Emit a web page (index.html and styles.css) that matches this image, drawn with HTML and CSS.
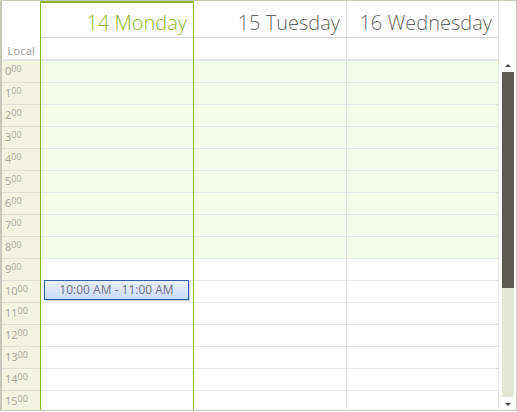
FILE: index.html
```html
<!DOCTYPE html>
<html>
<head>
<meta charset="utf-8">
<link rel="stylesheet" href="styles.css">
</head>
<body>
<div class="scheduler">
  <div class="head">
    <div class="corner"><span class="local">Local</span></div>
    <div class="day today"><div class="title">14 Monday</div><div class="allday"></div></div>
    <div class="day"><div class="title">15 Tuesday</div><div class="allday"></div></div>
    <div class="day"><div class="title">16 Wednesday</div><div class="allday"></div></div>
    <div class="head-fill"></div>
  </div>
  <div class="body">
    <div class="times">
      <div class="hour">0<sup>00</sup></div>
      <div class="hour">1<sup>00</sup></div>
      <div class="hour">2<sup>00</sup></div>
      <div class="hour">3<sup>00</sup></div>
      <div class="hour">4<sup>00</sup></div>
      <div class="hour">5<sup>00</sup></div>
      <div class="hour">6<sup>00</sup></div>
      <div class="hour">7<sup>00</sup></div>
      <div class="hour">8<sup>00</sup></div>
      <div class="hour">9<sup>00</sup></div>
      <div class="hour">10<sup>00</sup></div>
      <div class="hour">11<sup>00</sup></div>
      <div class="hour">12<sup>00</sup></div>
      <div class="hour">13<sup>00</sup></div>
      <div class="hour">14<sup>00</sup></div>
      <div class="hour">15<sup>00</sup></div>
    </div>
    <div class="col today">
      <div class="cell off"></div><div class="cell off"></div><div class="cell off"></div><div class="cell off"></div>
      <div class="cell off"></div><div class="cell off"></div><div class="cell off"></div><div class="cell off"></div>
      <div class="cell off"></div><div class="cell"></div><div class="cell"></div><div class="cell"></div>
      <div class="cell"></div><div class="cell"></div><div class="cell"></div><div class="cell"></div>
      <div class="appt">10:00 AM - 11:00 AM</div>
    </div>
    <div class="col">
      <div class="cell off"></div><div class="cell off"></div><div class="cell off"></div><div class="cell off"></div>
      <div class="cell off"></div><div class="cell off"></div><div class="cell off"></div><div class="cell off"></div>
      <div class="cell off"></div><div class="cell"></div><div class="cell"></div><div class="cell"></div>
      <div class="cell"></div><div class="cell"></div><div class="cell"></div><div class="cell"></div>
    </div>
    <div class="col">
      <div class="cell off"></div><div class="cell off"></div><div class="cell off"></div><div class="cell off"></div>
      <div class="cell off"></div><div class="cell off"></div><div class="cell off"></div><div class="cell off"></div>
      <div class="cell off"></div><div class="cell"></div><div class="cell"></div><div class="cell"></div>
      <div class="cell"></div><div class="cell"></div><div class="cell"></div><div class="cell"></div>
    </div>
    <div class="scrollbar">
      <div class="arrow up"></div>
      <div class="thumb"></div>
      <div class="track"></div>
      <div class="arrow down"></div>
    </div>
  </div>
</div>
</body>
</html>
```
FILE: styles.css
```css
html, body {
  margin: 0;
  padding: 0;
  background: #ffffff;
}

.scheduler {
  width: 517px;
  height: 411px;
  box-sizing: border-box;
  border: 1px solid #c9c9ba;
  border-left-width: 2px;
  display: flex;
  flex-direction: column;
  font-family: "Open Sans", "Noto Sans", sans-serif;
  overflow: hidden;
  background: #ffffff;
}

.head {
  display: flex;
  height: 60px;
  flex: none;
}

.corner {
  width: 38px;
  box-sizing: border-box;
  border-bottom: 2px solid #e6e6e6;
  display: flex;
  align-items: flex-end;
  justify-content: flex-end;
  padding: 0 5px 1px 0;
}

.local {
  font-size: 11.5px;
  line-height: 14px;
  color: #a49d98;
}

.day {
  width: 153px;
  box-sizing: border-box;
  border-right: 1px solid #e4e4e4;
  display: flex;
  flex-direction: column;
}

.day:nth-child(4) {
  width: 152px;
}

.day.today {
  width: 154px;
  border-left: 1px solid #8db51d;
  border-right: 1px solid #8db51d;
}

.title {
  height: 37px;
  box-sizing: border-box;
  border-bottom: 1px solid #d6d6d6;
  text-align: right;
  padding: 8px 6px 0 0;
  font-size: 20px;
  line-height: 28px;
  font-weight: 300;
  color: #666666;
  white-space: nowrap;
}

.today .title {
  border-top: 2px solid #8db51d;
  padding-top: 6px;
  color: #92b92a;
}

.allday {
  height: 23px;
  box-sizing: border-box;
  border-bottom: 2px solid #e6e6e6;
}

.head-fill {
  flex: 1;
}

.body {
  flex: 1;
  display: flex;
  overflow: hidden;
  min-height: 0;
}

.times {
  width: 38px;
  flex: none;
  background: #f2f4df;
}

.hour {
  height: 22px;
  box-sizing: border-box;
  border-bottom: 1px solid #dfe0d3;
  padding: 3px 0 0 3px;
  font-size: 11px;
  line-height: 11px;
  color: #a9a89c;
  white-space: nowrap;
}

.hour sup {
  font-size: 9px;
  line-height: 9px;
  vertical-align: 3px;
}

.col {
  width: 153px;
  flex: none;
  box-sizing: border-box;
  border-right: 1px solid #e4e4e4;
}

.col:nth-child(4) {
  width: 152px;
}

.col.today {
  width: 154px;
  position: relative;
  border-left: 1px solid #8db51d;
  border-right: 1px solid #8db51d;
}

.cell {
  height: 22px;
  box-sizing: border-box;
  border-bottom: 1px solid #e6e6e6;
}

.cell.off {
  background: #f4fdea;
}

.appt {
  position: absolute;
  left: 3px;
  top: 219px;
  width: 145px;
  height: 20px;
  box-sizing: border-box;
  border: 1px solid #2f5fa6;
  background: linear-gradient(#eaf1fd, #c9dbf7);
  box-shadow: 1px 1px 1px rgba(0, 0, 0, 0.18);
  font-size: 12px;
  line-height: 18px;
  text-align: center;
  color: #6b7488;
  white-space: nowrap;
}

.scrollbar {
  flex: 1;
  display: flex;
  flex-direction: column;
  align-items: center;
  padding: 1px 0 4px 1px;
}

.arrow {
  width: 0;
  height: 0;
  border-left: 3px solid transparent;
  border-right: 3px solid transparent;
  flex: none;
}

.arrow.up {
  border-bottom: 3px solid #4b4b45;
  margin: 2px 0 5px;
}

.arrow.down {
  border-top: 3px solid #4b4b45;
  margin-top: 6px;
}

.thumb {
  width: 12px;
  height: 216px;
  background: #5b5b53;
  flex: none;
}

.track {
  width: 12px;
  flex: 1;
  background: #e4e6d4;
}
```
